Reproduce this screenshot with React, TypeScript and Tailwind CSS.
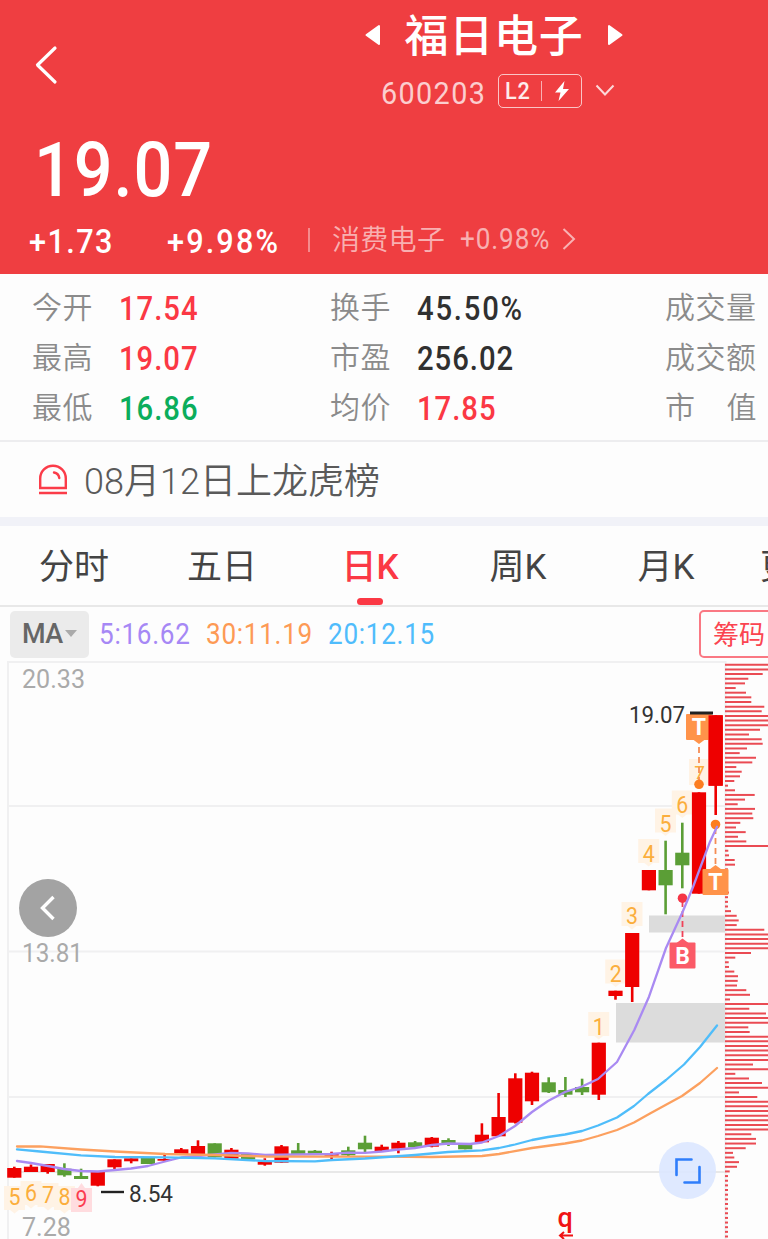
import React from 'react';
import clsx from 'clsx';

const RED = '#ee0000';
const GREEN = '#5b9e36';

// [open/close top, open/close bottom, high, low, rising]
const candles: [number, number, number, number, boolean][] = [
  [1168, 1177.7, 1166.7, 1177.7, true],
  [1166.7, 1172, 1164.5, 1172, true],
  [1164, 1172, 1164, 1173.7, true],
  [1168.7, 1175.3, 1163.3, 1176.7, false],
  [1176, 1179, 1168.7, 1179, false],
  [1172, 1185.7, 1172, 1186.3, true],
  [1159.3, 1167.3, 1159.3, 1169.3, true],
  [1158.3, 1161.3, 1158.3, 1163.3, true],
  [1157.3, 1164, 1157.3, 1164, false],
  [1159, 1160.7, 1155, 1162, true],
  [1149.3, 1155, 1148, 1155, true],
  [1146, 1154.3, 1140.3, 1154.3, true],
  [1143.3, 1157.3, 1143.3, 1157.3, false],
  [1149.7, 1158.7, 1148, 1158.7, true],
  [1153.7, 1159.3, 1153.7, 1159.3, false],
  [1161.7, 1164.7, 1158.3, 1165.7, true],
  [1146.3, 1162.7, 1145, 1162.7, true],
  [1150.3, 1154.3, 1143, 1154.3, false],
  [1150.7, 1154.3, 1150, 1154.3, false],
  [1153, 1155.7, 1151.7, 1159.3, true],
  [1150.3, 1155.3, 1146.7, 1156, false],
  [1142.7, 1149.3, 1135.7, 1153.3, false],
  [1146.7, 1151.3, 1144.7, 1151.3, true],
  [1142.7, 1148.7, 1141, 1153.3, true],
  [1142.3, 1147.3, 1141, 1147.3, false],
  [1137.7, 1146.7, 1137, 1147.3, true],
  [1140, 1144, 1138.3, 1146, false],
  [1144, 1149.3, 1144, 1149.3, false],
  [1134.7, 1142.3, 1123.3, 1142.3, true],
  [1117, 1136.3, 1093, 1137, true],
  [1078.3, 1122.7, 1073.3, 1123.5, true],
  [1072.7, 1101.3, 1071.7, 1105, true],
  [1082.3, 1092.3, 1077.3, 1093, false],
  [1090, 1094.7, 1077, 1097, false],
  [1087, 1092.3, 1078.7, 1095, false],
  [1042.7, 1094.7, 1042.7, 1100, true],
  [990.7, 996, 990.7, 999.7, true],
  [933, 987, 933, 1002, true],
  [870, 890.3, 870, 890.3, true],
  [870, 885.3, 840.7, 914.3, false],
  [852.7, 865.3, 822.7, 888.3, false],
  [792.3, 893.7, 792.3, 893.7, true],
  [715.3, 785.7, 715.3, 815, true],
];

const ma5 =
  '17,1161 31,1163 48,1166 64,1169 81,1171 98,1171.5 115,1170 131,1168.5 148,1166 165,1161.5 181,1157.5 198,1156 215,1154.5 231,1153 248,1153.3 265,1155 298,1154.5 331,1154 348,1152.7 365,1152.9 382,1151.5 398,1149.5 415,1148 432,1145 448,1143.5 470,1144 482,1142.5 499,1136 515,1126 532,1112 548,1101 565,1092 582,1086.5 598,1079 617,1062 634.3,1030 649,996.7 666,948 682.7,911.7 693,887 710,841.7 717,826.7';
const ma20 =
  '17,1149.3 40,1151.5 81,1155.3 115,1157 165,1157.3 215,1158.3 265,1161 315,1161.3 332,1160 365,1158.5 415,1155 448,1152 482,1150.3 499,1148 515,1144.5 532,1140 548,1137 565,1134.5 582,1131 598,1125.5 617,1117.5 634,1106 648,1094 666,1080 684,1064.5 700,1047 717,1025.5';
const ma30 =
  '17,1146.5 40,1146.3 81,1149.5 115,1151.5 165,1154 215,1155 265,1156.5 315,1156.7 382,1156.7 432,1157 482,1156 499,1154 532,1148 565,1143.5 582,1140.5 598,1136 617,1130 634,1122.5 650,1113.5 682,1096 700,1083 717,1068';

// width of every price level, 44 runs off the edge
const chips = [
  44, 44, 37.7, 23.3, 20, 10.7, 21, 26.3, 26.3, 39.3, 36.7, 44, 44, 44, 35, 24, 36.7, 37.7, 22, 14.7, 31, 27.3, 11.3, 16.7, 15,
  9.3, 3, 10, 29.7, 20, 12.7, 30, 27.3, 28.3, 15.3, 11, 20.7, 13, 21.3, 44, 3.3, 4, 9.7, 10, 3, 0, 0, 0, 0, 4, 3, 3, 3, 6,
  11.7, 13.7, 11.7, 39.3, 44, 44, 44, 44, 26, 10.3, 3.7, 4, 9.3, 13, 12.7, 12, 21.3, 25, 5, 44, 24.3, 41, 44, 44, 23.3, 24.7,
  44, 44, 44, 44, 44, 44, 28, 44, 10.3, 24, 37, 44, 14, 32.3, 44, 44, 44, 44, 44, 44, 44, 26.3, 31, 31, 20.7, 8, 9.3, 14,
  12, 4.7, 3, 3, 3, 3, 3, 3, 3, 3, 3, 3, 3, 3, 3, 3,
];

const marks = [
  { n: '1', x: 598.7, base: 1034.5, top: 1010 },
  { n: '2', x: 615.7, base: 982, top: 957.5 },
  { n: '3', x: 632, base: 923.5, top: 900 },
  { n: '4', x: 648.7, base: 861.5, top: 837 },
  { n: '5', x: 665.5, base: 831.5, top: 806.5 },
  { n: '6', x: 682.3, base: 812.5, top: 788.5 },
  { n: '5', x: 14.5, base: 1205, top: 1184 },
  { n: '6', x: 31, base: 1200.5, top: 1179 },
  { n: '7', x: 48, base: 1203, top: 1181 },
  { n: '8', x: 64.5, base: 1205, top: 1184 },
];

const stats = [
  [
    { label: '今开', value: '17.54', color: 'text-[#fb3844]' },
    { label: '最高', value: '19.07', color: 'text-[#fb3844]' },
    { label: '最低', value: '16.86', color: 'text-[#0bad5c]' },
  ],
  [
    { label: '换手', value: '45.50%', color: 'text-[#303030]' },
    { label: '市盈', value: '256.02', color: 'text-[#303030]' },
    { label: '均价', value: '17.85', color: 'text-[#fb3844]' },
  ],
];

// narrow figures
const Num = ({ children, className }: { children: string; className?: string }) => (
  <span className={clsx('inline-block origin-left scale-x-90 whitespace-nowrap', className)}>{children}</span>
);

const Header = () => (
  <header className="h-[274px] bg-[#ef3e41] text-white">
    <div className="flex h-[115px]">
      <svg className="ml-[34px] mt-[44px] h-[42px] w-[26px]" viewBox="0 0 26 42" fill="none" stroke="currentColor" strokeWidth="3.200" strokeLinecap="round" strokeLinejoin="round">
        <path d="M21 4 3.500 21 21 38" />
      </svg>
      <div className="ml-[305px] flex w-[258px] flex-col">
        <div className="flex h-[70px] items-center justify-between">
          <svg className="h-[22px] w-[16px]" viewBox="0 0 16 22" fill="currentColor" stroke="currentColor" strokeWidth="2" strokeLinejoin="round">
            <path d="M14 2v18L1.500 11z" />
          </svg>
          <h1 className="whitespace-nowrap pt-[4px] text-[44px] font-medium leading-[70px] tracking-[0.8px]">福日电子</h1>
          <svg className="h-[22px] w-[16px]" viewBox="0 0 16 22" fill="currentColor" stroke="currentColor" strokeWidth="2" strokeLinejoin="round">
            <path d="M2 2v18l12.500-9z" />
          </svg>
        </div>
        <div className="flex h-[42px] items-center pl-[16px]">
          <span className="w-[117px] pt-[3px] leading-none text-white/75">
            <Num className="text-[32px] tracking-[1.5px]">600203</Num>
          </span>
          <span className="flex h-[34px] w-[84px] items-center rounded-[5px] border-[1.500px] border-white/70 pl-[6px]">
            <span className="w-[36px] text-[24px] font-medium leading-none text-white/90">
              <Num className="tracking-[1px]">L2</Num>
            </span>
            <span className="h-[20px] w-px bg-white/60" />
            <svg className="ml-[12px] h-[20px] w-[16px]" viewBox="0 0 16 20" fill="currentColor">
              <path d="M10.500 0 1 11.500h5.500L4.500 20 15 8H9z" />
            </svg>
          </span>
          <svg className="ml-[13px] h-[14px] w-[20px]" viewBox="0 0 20 14" fill="none" stroke="currentColor" strokeOpacity=".8" strokeWidth="2">
            <path d="m1.500 1.500 8.500 9L18.500 1.500" />
          </svg>
        </div>
      </div>
    </div>
    <div className="h-[106px] pl-[34px] text-[76px] font-medium leading-[110px]">
      <Num className="tracking-[1px]">19.07</Num>
    </div>
    <div className="flex h-[38px] items-center">
      <span className="ml-[29px] w-[138px] pt-[2px] text-[34px] font-medium">
        <Num className="tracking-[1.6px]">+1.73</Num>
      </span>
      <span className="w-[141px] pt-[2px] text-[34px] font-medium">
        <Num className="tracking-[2.4px]">+9.98%</Num>
      </span>
      <span className="h-[24px] w-[2px] bg-white/40" />
      <span className="ml-[22px] w-[128px] whitespace-nowrap pt-[2px] text-[28px] font-[350] tracking-[0.3px] text-white/60">消费电子</span>
      <span className="w-[102px] whitespace-nowrap text-[29px] text-white/60">
        <Num className="tracking-[1px]">+0.98%</Num>
      </span>
      <svg className="h-[24px] w-[14px]" viewBox="0 0 14 24" fill="none" stroke="currentColor" strokeOpacity=".6" strokeWidth="2">
        <path d="m1.500 1 10.500 10L1.500 21" />
      </svg>
    </div>
  </header>
);

const Stats = () => (
  <section className="flex h-[168px] overflow-hidden border-b-2 border-[#ededef] pl-[32px] pt-[9px] text-[30px] leading-[50px] text-[#8b8b8b]">
    {stats.map((column, i) => (
      <div key={i} className={i === 0 ? 'w-[298px]' : 'w-[335px]'}>
        {column.map(item => (
          <div key={item.label} className="flex h-[50px]">
            <span className="w-[87px] shrink-0 font-[350] tracking-[0.5px]">{item.label}</span>
            <span className={clsx('pt-px text-[32.500px] font-medium', item.color)}>
              <Num className={item.value.endsWith('%') ? 'tracking-[2px]' : 'tracking-[1.1px]'}>{item.value}</Num>
            </span>
          </div>
        ))}
      </div>
    ))}
    <div className="w-[92px] shrink-0 font-[350] tracking-[0.5px]">
      <div>成交量</div>
      <div>成交额</div>
      <div className="flex justify-between">
        <span>市</span>
        <span>值</span>
      </div>
    </div>
  </section>
);

const Notice = () => (
  <section className="flex h-[75px] items-center pl-[38px]">
    <svg className="mb-[2px] h-[32px] w-[30px]" viewBox="0 0 30 32" fill="none" stroke="#fb3c49" strokeWidth="2.400">
      <path d="M2.200 25V15.500a12.800 12.800 0 0 1 25.600 0V25zM1 30h28" />
      <path d="M16 9.500c3 .5 4.800 2.200 5.300 5.500" strokeLinecap="round" />
    </svg>
    <span className="ml-[16px] pt-[6px] text-[36px] font-[350] leading-[69px] text-[#5a5a5a]">08月12日上龙虎榜</span>
  </section>
);

const Tabs = () => (
  <nav className="flex h-[81px] overflow-hidden border-b-2 border-[#e8e8e8] text-[35px] text-[#444]">
    {['分时', '五日', '日K', '周K', '月K'].map(tab => (
      <div key={tab} className={clsx('flex w-[148px] shrink-0 flex-col items-center', tab === '日K' && 'font-medium text-[#fb3844]')}>
        <span className="h-[72px] leading-[83px]">{tab}</span>
        {tab === '日K' ? <span className="h-[7px] w-[26px] rounded-full bg-[#fb3844]" /> : null}
      </div>
    ))}
    <span className="shrink-0 pl-[20px] leading-[83px]">更多</span>
  </nav>
);

const Averages = () => (
  <div className="flex h-[54px] items-center overflow-hidden pl-[10px] text-[29px]">
    <button className="flex h-[47px] w-[79px] shrink-0 items-center rounded-[5px] bg-[#ebebeb] pl-[12px] text-[27px] font-medium tracking-[-0.5px] text-[#666]">
      MA
      <svg className="ml-[2px] h-[8px] w-[12px]" viewBox="0 0 12 8" fill="#aaa">
        <path d="M0 0h12L6 7z" />
      </svg>
    </button>
    <span className="ml-[10px] w-[107px] shrink-0 pt-px text-[#a688f5]">
      <Num className="tracking-[0.8px]">5:16.62</Num>
    </span>
    <span className="w-[122px] shrink-0 pt-px text-[#fd9a55]">
      <Num className="tracking-[0.8px]">30:11.19</Num>
    </span>
    <span className="w-[371px] shrink-0 pt-px text-[#4fbcfc]">
      <Num className="tracking-[0.8px]">20:12.15</Num>
    </span>
    <button className="h-[48px] w-[90px] shrink-0 rounded-[5px] border-2 border-[#fa7883] pl-[12px] text-left text-[26px] leading-[46px] text-[#fb4450]">
      筹码
    </button>
  </div>
);

const TradeTag = ({ x, y, label, color, up }: { x: number; y: number; label: string; color: string; up: boolean }) => (
  <g>
    <rect x={x - 13} y={y} width="26" height="26" rx="1" fill={color} />
    <path d={up ? `M${x - 6} ${y + 0.5} l6 -4.500 l6 4.500z` : `M${x - 6} ${y + 25.5} l6 4.500 l6 -4.500z`} fill={color} />
    <text x={x} y={y + 21} textAnchor="middle" fontSize="23" fontWeight="700" fill="#fff">
      {label}
    </text>
  </g>
);

const Chart = () => (
  <div className="relative h-[578px] overflow-hidden">
    <svg className="block h-[578px] w-[768px]" viewBox="0 661 768 578" fontFamily='Roboto, "Liberation Sans", sans-serif'>
      <g stroke="#f0f0f1" strokeWidth="2">
        <path d="M8 662h717M8 806h717M8 951.500h717M8 1097h717M8 661v578M725.500 661v578" fill="none" />
        <path d="M8 1172h717" stroke="#e8e8e8" />
      </g>
      <rect x="649" y="915.5" width="76" height="17" fill="#dcdcdc" />
      <rect x="616" y="1003" width="109" height="39.500" fill="#dcdcdc" />

      <g stroke="#ea4b53" strokeWidth="2">
        {chips.map((w, i) => (w ? <line key={i} x1="725" x2={725 + w} y1={664.8 + i * 4.648} y2={664.8 + i * 4.648} /> : null))}
      </g>

      {marks.map(m => (
        <g key={m.x}>
          <rect x={m.x - 10.5} y={m.top + 2} width="21" height="24" fill="#fff3e5" />
          <path d={`M${m.x - 5} ${m.top + 25.5}l5 4 5-4z`} fill="#fff3e5" />
        </g>
      ))}
      <rect x="689" y="759" width="19" height="26" fill="#fff3e5" />
      <path d="M71 1188h7l3.500-5 3.500 5h7v24H71z" fill="#ffdcdf" />
      <g fontSize="24" fill="#fbae3c" textAnchor="middle">
        {marks.map(m => (
          <text key={m.x} x={m.x} y={m.base} textLength="12" lengthAdjust="spacingAndGlyphs">
            {m.n}
          </text>
        ))}
        <text x="699.500" y="778.500" fontSize="19">7</text>
        <text x="81.500" y="1206.500" textLength="12" lengthAdjust="spacingAndGlyphs" fill="#fb3c50">9</text>
      </g>

      {candles.map(([top, bottom, high, low, rising], i) => {
        const x = 14.3 + i * 16.7;
        return (
          <g key={i} fill={rising ? RED : GREEN}>
            <rect x={x - 1.3} y={high} width="2.600" height={low - high} />
            <rect x={x - 7.1} y={top} width="14.200" height={bottom - top} />
          </g>
        );
      })}

      <g strokeWidth="1.800" strokeDasharray="6 4">
        <path d="M699 747v35" stroke="#f58d55" />
        <path d="M715.500 828v38" stroke="#f58d55" />
        <path d="M682.500 901v36" stroke="#f04258" />
      </g>
      <TradeTag x={699} y={714} label="T" color="#ff934a" up={false} />
      <rect x="708.500" y="715.300" width="14.200" height="70.400" fill={RED} />
      <TradeTag x={715.5} y={869} label="T" color="#ff934a" up />
      <TradeTag x={682.5} y={942.5} label="B" color="#fb5a67" up />
      <circle cx="699" cy="784.300" r="4.800" fill="#fc7d20" />
      <circle cx="715.500" cy="824.500" r="4.800" fill="#fc7d20" />
      <circle cx="682.500" cy="898.200" r="4.800" fill="#f53546" />

      <g fill="none" strokeWidth="2.300" strokeLinejoin="round" strokeLinecap="round">
        <polyline points={ma5} stroke="#a98af2" />
        <polyline points={ma30} stroke="#fca05f" />
        <polyline points={ma20} stroke="#4fbdfa" />
      </g>

      <path d="M690 713h23" stroke="#222" strokeWidth="3" />
      <path d="M101 1192h23" stroke="#222" strokeWidth="2.400" />
      <g fontSize="24" fill="#333">
        <text x="629" y="722.500" textLength="56" lengthAdjust="spacingAndGlyphs">19.07</text>
        <text x="129" y="1201.500" textLength="44" lengthAdjust="spacingAndGlyphs">8.54</text>
      </g>
      <g fontSize="26" fill="#aaa">
        <text x="22" y="688" textLength="63" lengthAdjust="spacingAndGlyphs">20.33</text>
        <text x="22" y="962" textLength="61" lengthAdjust="spacingAndGlyphs">13.81</text>
        <text x="22" y="1236" textLength="49" lengthAdjust="spacingAndGlyphs">7.28</text>
      </g>
      <text x="557.500" y="1227" fontSize="27" fontWeight="500" fill="#f01414">q</text>
      <path d="M559.500 1235.500H573M564 1232l-4 3.500 4 3.500" stroke="#f01414" strokeWidth="2" fill="none" />
    </svg>
    <button className="absolute left-[19px] top-[218px] flex size-[58px] items-center justify-center rounded-full bg-[#a3a3a3]">
      <svg className="h-[28px] w-[18px]" viewBox="0 0 18 28" fill="none" stroke="#fff" strokeWidth="3.400">
        <path d="M14.500 3 3.500 14l11 11" />
      </svg>
    </button>
    <button className="absolute left-[659px] top-[481px] flex size-[57px] items-center justify-center rounded-full bg-[#dbe7ff]/90">
      <svg className="size-[28px]" viewBox="0 0 28 28" fill="none" stroke="#2f7dfb" strokeWidth="2.600" strokeLinecap="round">
        <path d="M2.500 18V2.500h15M25.500 10v15.500h-15" />
      </svg>
    </button>
  </div>
);

const App = () => (
  <div className="h-[1239px] w-[768px] overflow-hidden bg-[#fdfdfd] font-[Roboto,'Noto_Sans_CJK_SC',sans-serif]">
    <Header />
    <Stats />
    <Notice />
    <div className="h-[9px] bg-[#f1f2f8]" />
    <Tabs />
    <Averages />
    <Chart />
  </div>
);

export default App;
